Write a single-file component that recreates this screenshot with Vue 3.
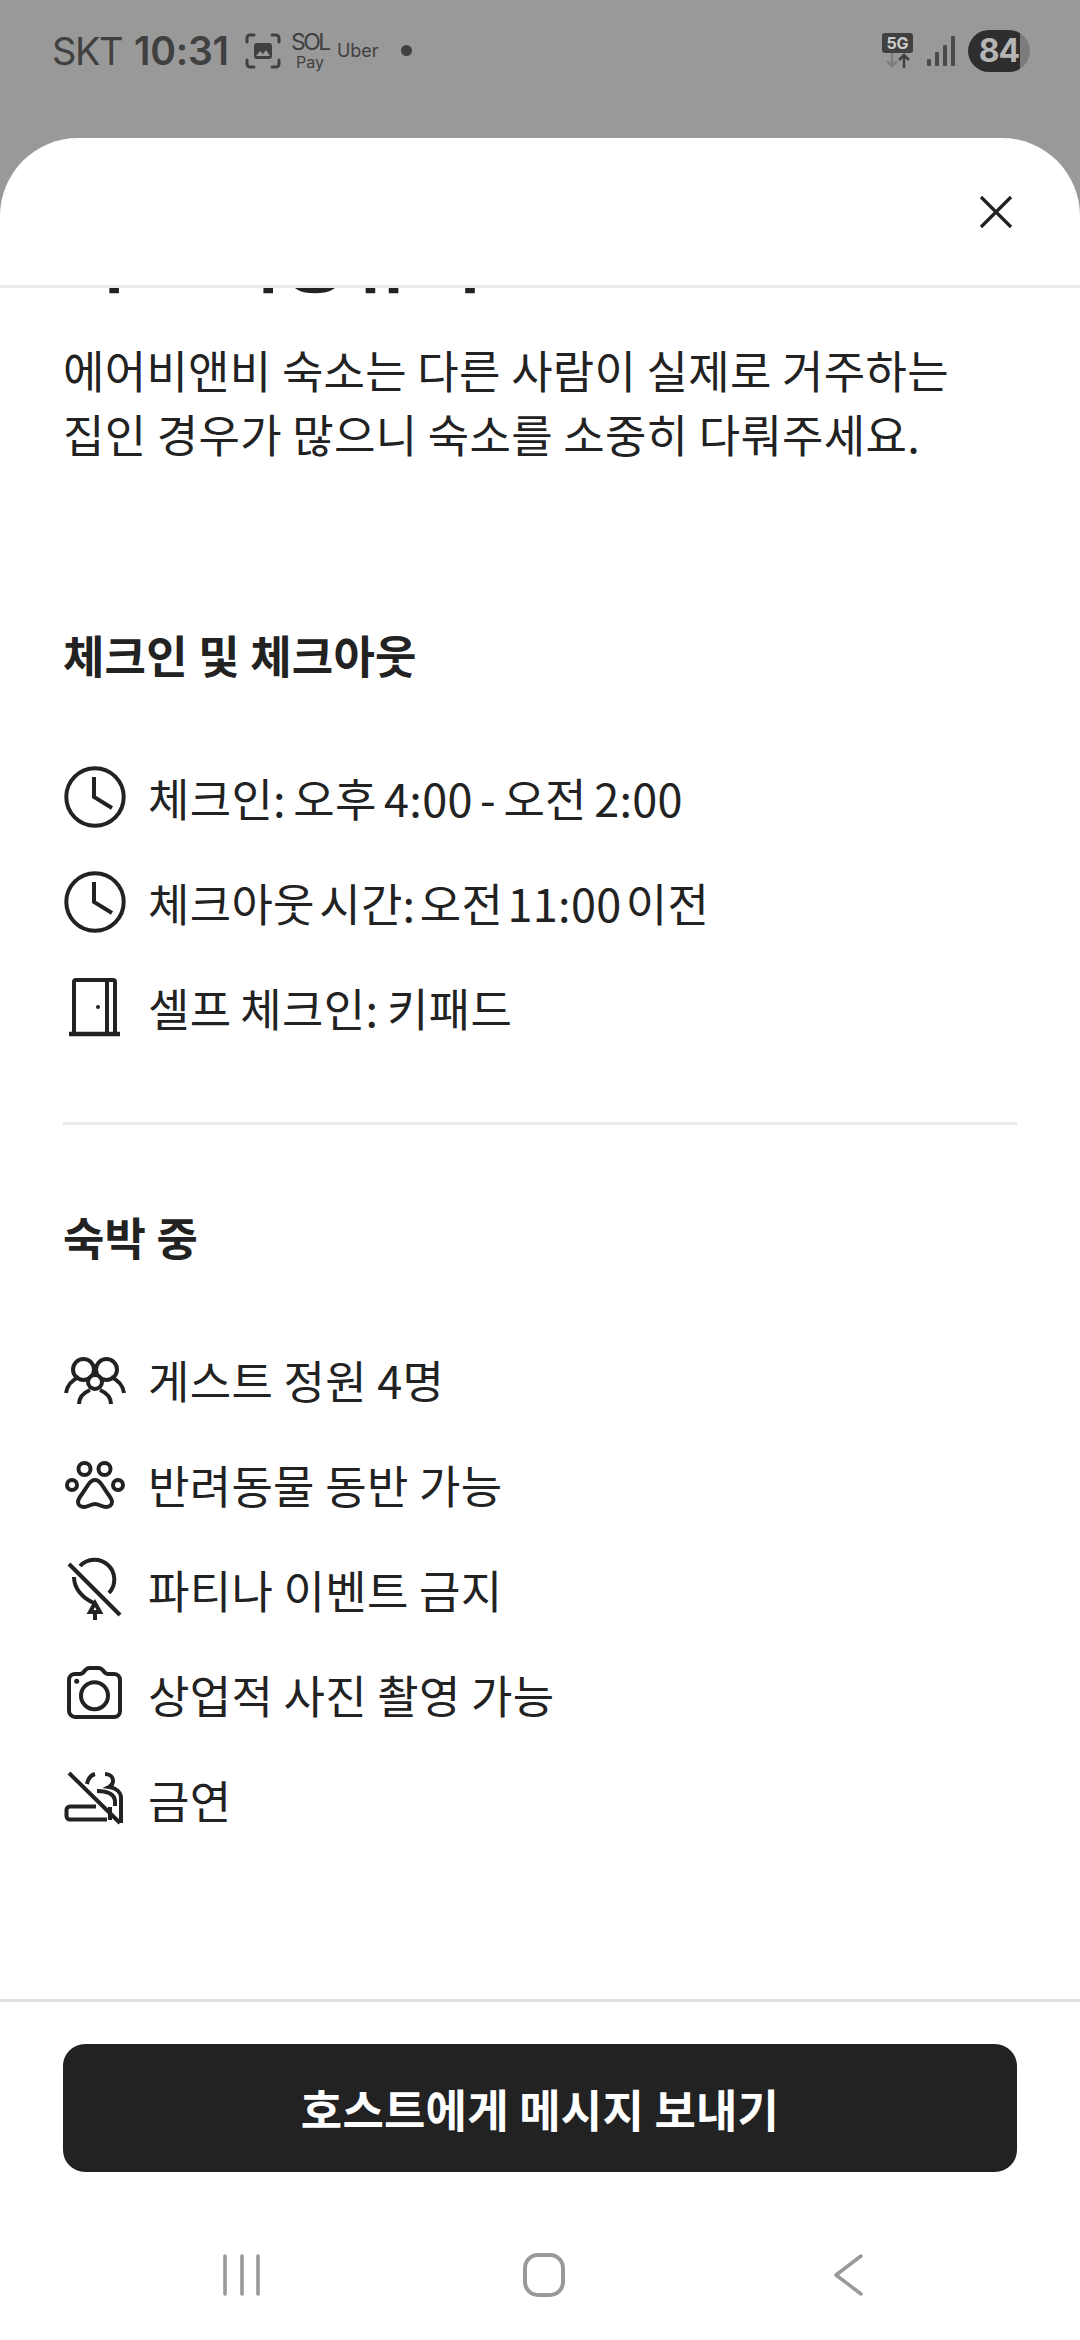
<script setup>
const groups = [
  { title: '체크인 및 체크아웃', cls: 'g1', rows: [
    { icon: 'clock', text: '체크인: 오후 4:00 - 오전 2:00', cls: 'ws-a' },
    { icon: 'clock', text: '체크아웃 시간: 오전 11:00 이전', cls: 'ws-b' },
    { icon: 'door', text: '셀프 체크인: 키패드', cls: 'ws-c' },
  ]},
  { title: '숙박 중', cls: 'g2', rows: [
    { icon: 'people', text: '게스트 정원 4명' },
    { icon: 'paw', text: '반려동물 동반 가능' },
    { icon: 'balloon', text: '파티나 이벤트 금지' },
    { icon: 'camera', text: '상업적 사진 촬영 가능' },
    { icon: 'smoke', text: '금연' },
  ]},
]
</script>

<template>
  <div class="screen">
    <div class="status">
      <span class="carrier">SKT</span>
      <span class="time">10:31</span>
      <svg class="ic-shot" width="36" height="36" viewBox="0 0 36 36" fill="none" stroke="#404040" stroke-width="3" stroke-linecap="round">
        <path d="M2 9V5a3 3 0 0 1 3-3h4M27 2h4a3 3 0 0 1 3 3v4M34 27v4a3 3 0 0 1-3 3h-4M9 34H5a3 3 0 0 1-3-3v-4"/>
        <rect x="9" y="10" width="18" height="16" rx="3" fill="#404040" stroke="none"/>
        <path d="M11 23l4-5 3 3 3-4 4 6z" fill="#999" stroke="none"/>
      </svg>
      <span class="sol"><span class="sol-top">SOL</span><span class="sol-pay">Pay</span></span>
      <span class="uber">Uber</span>
      <span class="dot"></span>
      <span class="spacer"></span>
      <span class="net"><span class="fiveg">5G</span>
        <svg width="30" height="15" viewBox="0 0 30 15" fill="none" stroke-width="2.500">
          <path d="M9 0v13M4 8l5 5 5-5" stroke="#7d7d7d"/>
          <path d="M21 15V2M16 7l5-5 5 5" stroke="#404040"/>
        </svg>
      </span>
      <svg class="bars" width="30" height="30" viewBox="0 0 30 30" fill="#4a4a4a">
        <rect x="1" y="23" width="4" height="7" rx="1"/>
        <rect x="9" y="16" width="4" height="14" rx="1"/>
        <rect x="17" y="9" width="4" height="21" rx="1"/>
        <rect x="25" y="0" width="4" height="30" rx="1"/>
      </svg>
      <span class="battery"><span class="batt-num">84</span></span>
    </div>

    <div class="sheet">
      <div class="head">
        <svg width="34" height="34" viewBox="0 0 34 34" fill="none" stroke="#222" stroke-width="3.200">
          <path d="M2 2l30 30M32 2L2 32"/>
        </svg>
      </div>
      <div class="body">
        <h2 class="clipped">숙소 이용규칙</h2>
        <p class="intro">에어비앤비 숙소는 다른 사람이 실제로 거주하는<br>집인 경우가 많으니 숙소를 소중히 다뤄주세요.</p>

        <section v-for="g in groups" :key="g.title" :class="['group', g.cls]">
          <h3>{{ g.title }}</h3>
          <div class="rows">
            <div v-for="r in g.rows" :key="r.text" :class="['row', r.cls]">
              <svg class="icon" width="64" height="64" viewBox="0 0 64 64" fill="none" stroke="#222" stroke-width="4">
                <template v-if="r.icon === 'clock'">
                  <circle cx="32" cy="32" r="28.700"/>
                  <path d="M31 12v20l18 11"/>
                </template>
                <template v-else-if="r.icon === 'door'">
                  <path d="M11 58V7a2 2 0 0 1 2-2h37a2 2 0 0 1 2 2v51M44 5v53"/>
                  <path d="M6 59h51" stroke-width="4.500"/>
                  <circle cx="35" cy="32" r="2" fill="#222" stroke="none"/>
                </template>
                <template v-else-if="r.icon === 'people'">
                  <circle cx="20.500" cy="22.500" r="10.500"/>
                  <circle cx="43.500" cy="22.500" r="10.500"/>
                  <circle cx="32" cy="35" r="7" fill="#fff"/>
                  <path d="M3 46c1-7 6-13 13-16M61 46c-1-7-6-13-13-16M16 57c0-6 4-11 11-14M48 57c0-6-4-11-11-14"/>
                </template>
                <template v-else-if="r.icon === 'paw'">
                  <circle cx="21.500" cy="17" r="6"/>
                  <circle cx="41.500" cy="17" r="6"/>
                  <circle cx="9" cy="33" r="5"/>
                  <circle cx="55" cy="33" r="5"/>
                  <path d="M32 28c-3 0-5 2-7 5l-6 9c-3 4-4 6-4 8 0 3 3 5 6 5 4 0 7-3 11-3s7 3 11 3c3 0 6-2 6-5 0-2-1-4-4-8l-6-9c-2-3-4-5-7-5z"/>
                </template>
                <template v-else-if="r.icon === 'balloon'">
                  <path d="M17 9A19.500 19.500 0 1 1 46 36"/>
                  <path d="M11 20c0 11 8 21 20 26"/>
                  <path d="M32 46l-5 9h10zM32 55v8"/>
                  <path d="M6 7l51 51"/>
                </template>
                <template v-else-if="r.icon === 'camera'">
                  <path d="M12 12h5c2 0 3-1 4.500-3 1.500-2 3-3 5-3h9c2 0 3.500 1 5 3 1.500 2 2.500 3 4.500 3h6c3 0 6 2 6 6v31c0 3-2 6-6 6H12c-3 0-6-3-6-6V18c0-4 3-6 6-6z"/>
                  <circle cx="31.500" cy="33.700" r="13.500"/>
                  <circle cx="13.700" cy="19.300" r="2.500" fill="#222" stroke="none"/>
                </template>
                <template v-else>
                  <path d="M6 6l51 50"/>
                  <path d="M33 39.500H7a3.500 3.500 0 0 0-3.500 3.500v6a3.500 3.500 0 0 0 3.500 3.500H44"/>
                  <path d="M24 17c1-5 4-9 8-10M42 7c5 0 8 3 8 7 0 3-2 5-4 6 7 1 12 5 12 11v25M34 24c7 0 17 1 18 10v5M47 40v13"/>
                </template>
              </svg>
              <span>{{ r.text }}</span>
            </div>
          </div>
        </section>
      </div>
      <div class="foot">
        <button class="cta">호스트에게 메시지 보내기</button>
      </div>
      <div class="nav">
        <svg width="60" height="44" viewBox="0 0 60 44" fill="none" stroke="#999" stroke-width="3.600" stroke-linecap="round">
          <path d="M14 3v38M31 3v38M47 3v38"/>
        </svg>
        <svg width="60" height="44" viewBox="0 0 60 44" fill="none" stroke="#999" stroke-width="4">
          <rect x="11" y="2" width="38" height="40" rx="13"/>
        </svg>
        <svg width="60" height="44" viewBox="0 0 60 44" fill="none" stroke="#999" stroke-width="3.500" stroke-linecap="round" stroke-linejoin="round">
          <path d="M44 3L19 22l25 19"/>
        </svg>
      </div>
    </div>
  </div>
</template>

<style>
html, body { margin: 0; padding: 0; background: #999; }
</style>

<style scoped>
.screen {
  width: 1080px;
  height: 2340px;
  background: #999;
  display: flex;
  flex-direction: column;
  overflow: hidden;
  font-family: "Noto Sans CJK KR", "Noto Sans", sans-serif;
  color: #222;
}
.status {
  height: 138px;
  flex: none;
  box-sizing: border-box;
  padding: 0 50px 37px 52px;
  display: flex;
  align-items: center;
  color: #404040;
  font-family: Inter, sans-serif;
}
.carrier { font-size: 38px; letter-spacing: -1.500px; font-weight: 400; }
.time { font-size: 39px; font-weight: 600; margin-left: 12px; letter-spacing: -0.200px; }
.ic-shot { margin-left: 16px; }
.sol { display: flex; flex-direction: column; align-items: center; margin-left: 13px; line-height: 1; width: 32px; }
.sol-top { font-size: 23px; letter-spacing: -2.500px; }
.sol-pay { font-size: 16px; margin-top: 0; }
.uber { font-size: 18px; margin-left: 11px; }
.dot { width: 11px; height: 11px; border-radius: 50%; background: #404040; margin-left: 22px; }
.spacer { flex: 1; }
.net { display: flex; flex-direction: column; align-items: center; margin-right: 13px; }
.fiveg { background: #404040; color: #ccc; font-size: 16px; font-weight: 700; line-height: 20px; width: 31px; text-align: center; border-radius: 3px; }
.bars { margin-right: 12px; }
.battery {
  width: 62px; height: 42px; border-radius: 21px;
  background: linear-gradient(90deg, #2e2e2e 0 52px, #7c7c7c 52px);
  color: #b5b5b5; font-size: 32px; font-weight: 700;
  display: flex; align-items: center; justify-content: center;
}
.batt-num { letter-spacing: -1px; }

.sheet {
  flex: 1;
  min-height: 0;
  background: #fff;
  border-radius: 78px 78px 0 0;
  display: flex;
  flex-direction: column;
}
.head {
  height: 150px;
  flex: none;
  box-sizing: border-box;
  border-bottom: 3px solid #ebebeb;
  display: flex;
  justify-content: flex-end;
  align-items: center;
  padding: 0 67px 0 0;
}
.body {
  flex: 1;
  min-height: 0;
  overflow: hidden;
  padding: 0 63px;
}
.clipped {
  font-size: 72px;
  line-height: 80px;
  margin: -73px 0 0;
  font-weight: 600;
  letter-spacing: 1px;
}
.intro {
  margin: 43px 0 0;
  font-size: 45px;
  line-height: 64px;
  letter-spacing: 0.300px;
}
.group h3 {
  margin: 0;
  font-size: 45px;
  line-height: 60px;
  font-weight: 600;
  letter-spacing: 0.200px;
}
.g1 { margin-top: 159px; padding-bottom: 83px; border-bottom: 3px solid #ebebeb; }
.g2 { margin-top: 82px; }
.rows { display: flex; flex-direction: column; gap: 41px; margin-top: 80px; }
.row {
  display: flex; align-items: center; gap: 21px; height: 64px;
  font-size: 45px;
  letter-spacing: 0.300px;
  font-variant-numeric: proportional-nums;
}
.ws-a { word-spacing: -3px; }
.ws-b { word-spacing: -6px; }
.ws-c { word-spacing: -1.500px; }
.icon { flex: none; }
.foot {
  flex: none;
  height: 173px;
  box-sizing: border-box;
  border-top: 3px solid #e2e2e2;
  padding: 42px 63px 0;
}
.cta {
  display: block;
  width: 100%;
  height: 128px;
  border: 0;
  border-radius: 22px;
  background: #222;
  color: #fff;
  font: 600 45px "Noto Sans CJK KR", sans-serif;
  letter-spacing: 0.200px;
}
.nav {
  flex: none;
  height: 168px;
  box-sizing: border-box;
  padding: 37px 203px 0 211px;
  display: flex;
  justify-content: space-between;
  align-items: center;
}
</style>
